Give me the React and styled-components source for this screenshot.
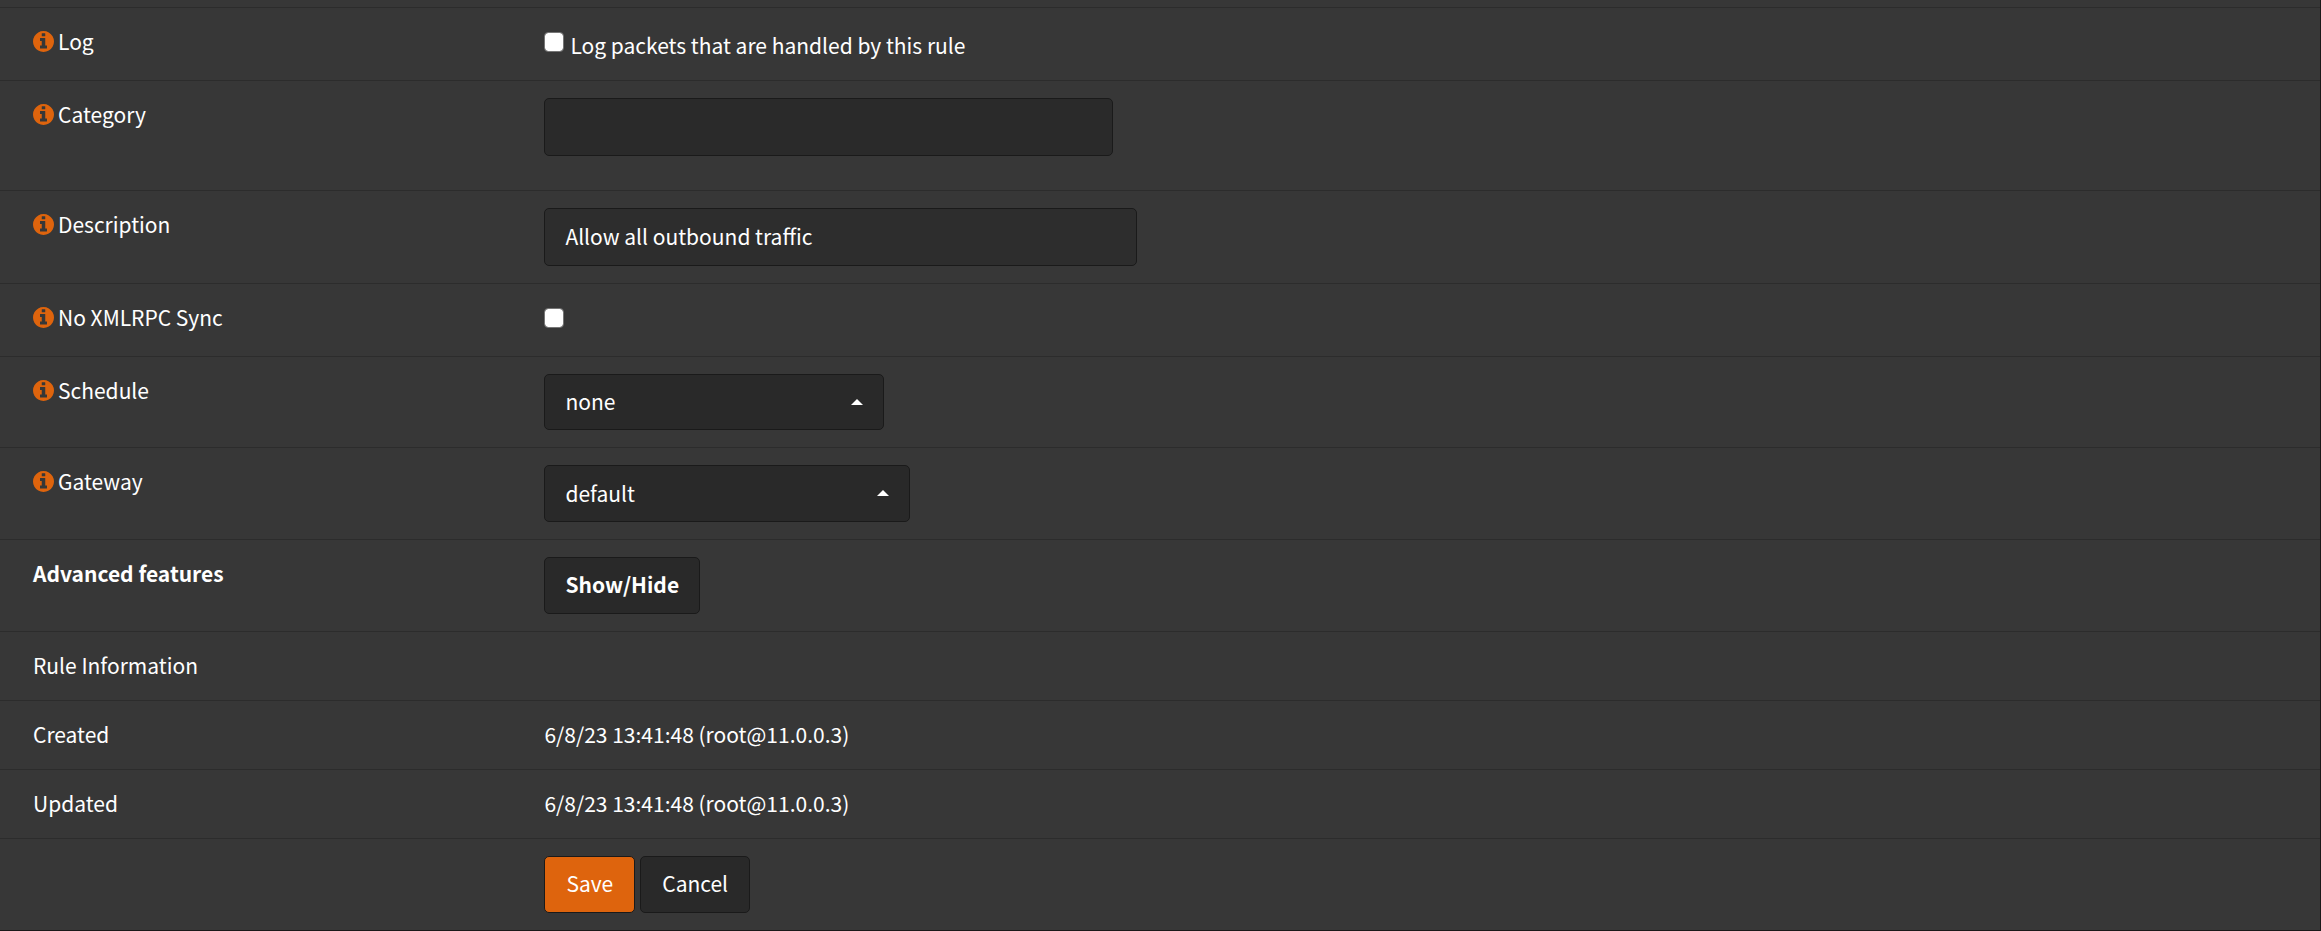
import React from "react";
import styled, { createGlobalStyle } from "styled-components";

const GlobalStyle = createGlobalStyle`
  * { box-sizing: border-box; }
  body {
    margin: 0;
    background: #373737;
    color: #fff;
    font-family: "Noto Sans CJK SC", "Noto Sans", sans-serif;
    font-size: 21px;
    line-height: 32px;
  }
  button, input, select { font: inherit; color: inherit; margin: 0; }
`;

const Panel = styled.form`
  padding-top: 7px;
  border-right: 1px solid #1a1a1a;
  border-bottom: 1px solid #1a1a1a;
`;

const Row = styled.div`
  display: grid;
  grid-template-columns: 22% 1fr;
  border-top: 1px solid #2c2c2c;
`;

const LabelCell = styled.div`
  display: flex;
  align-items: flex-start;
  gap: 4px;
  padding: 17px 0 19px 33px;
  font-weight: ${(p) => (p.$strong ? 700 : 400)};
`;

const ValueCell = styled.div`
  display: flex;
  align-items: flex-start;
  gap: 5px;
  padding: 17px 17px 17px 34px;
  padding-bottom: ${(p) => (p.$spacious ? 34 : 17)}px;
`;

const HelpButton = styled.button`
  display: block;
  margin-top: 6px;
  padding: 0;
  border: 0;
  background: none;
  color: #de640d;
  line-height: 0;
  cursor: pointer;
`;

const CheckLine = styled.label`
  display: flex;
  align-items: flex-start;
  gap: 6px;
  height: 38px;
`;

const CheckText = styled.span`
  padding-top: 4px;
`;

const Checkbox = styled.input.attrs({ type: "checkbox" })`
  appearance: none;
  width: 20px;
  height: 20px;
  margin-top: 7px;
  border: 1px solid #767676;
  border-radius: 4px;
  background: #fff;
  background-clip: padding-box;
  &:checked { background: #de640d; }
`;

const TextInput = styled.input.attrs({ type: "text" })`
  width: ${(p) => p.$width}px;
  max-width: 100%;
  height: 58px;
  padding: 0 20px 2px;
  border: 1px solid #1a1a1a;
  border-radius: 5px;
  background: ${(p) => p.$tone};
`;

const SelectBox = styled.div`
  position: relative;
  width: ${(p) => p.$width}px;
  max-width: 100%;
  height: ${(p) => p.$height}px;
`;

const Select = styled.select`
  appearance: none;
  width: 100%;
  height: 100%;
  padding: 0 48px 2px 20px;
  border: 1px solid #1a1a1a;
  border-radius: 5px;
  background: #292929;
`;

const Caret = styled.svg`
  position: absolute;
  right: 21px;
  top: 25px;
  pointer-events: none;
`;

const Button = styled.button`
  height: 57px;
  padding: 0 ${(p) => (p.$strong ? 20 : 21)}px 4px;
  border: 1px solid #1a1a1a;
  border-radius: 5px;
  background: ${(p) => (p.$primary ? "#de640d" : "#292929")};
  font-weight: ${(p) => (p.$strong ? 700 : 400)};
  cursor: pointer;
`;

const InfoIcon = () => (
  <svg width="21" height="21" viewBox="0 128 1536 1536" fill="currentColor" aria-hidden="true">
    <path d="M1024 1376v-160q0-14-9-23t-23-9h-96v-512q0-14-9-23t-23-9h-320q-14 0-23 9t-9 23v160q0 14 9 23t23 9h96v320h-96q-14 0-23 9t-9 23v160q0 14 9 23t23 9h448q14 0 23-9t9-23zm-128-896v-160q0-14-9-23t-23-9h-192q-14 0-23 9t-9 23v160q0 14 9 23t23 9h192q14 0 23-9t9-23zm640 416q0 209-103 385.500t-279.500 279.500-385.500 103-385.500-103-279.500-279.500-103-385.500 103-385.500 279.500-279.500 385.500-103 385.500 103 279.500 279.500 103 385.500z" />
  </svg>
);

function Field({ id, label, spacious, children }) {
  return (
    <Row>
      <LabelCell>
        <HelpButton type="button" aria-label={`Help: ${label}`}>
          <InfoIcon />
        </HelpButton>
        <label htmlFor={id}>{label}</label>
      </LabelCell>
      <ValueCell $spacious={spacious}>{children}</ValueCell>
    </Row>
  );
}

function Info({ label, children }) {
  return (
    <Row>
      <LabelCell>{label}</LabelCell>
      <ValueCell>{children}</ValueCell>
    </Row>
  );
}

function Dropdown({ id, width, height, value }) {
  return (
    <SelectBox $width={width} $height={height}>
      <Select id={id} defaultValue={value}>
        <option value={value}>{value}</option>
      </Select>
      <Caret width="12" height="6" viewBox="0 0 12 6" fill="#fff" aria-hidden="true">
        <path d="M0 6L6 0L12 6Z" />
      </Caret>
    </SelectBox>
  );
}

export default function App() {
  return (
    <>
      <GlobalStyle />
      <Panel onSubmit={(e) => e.preventDefault()}>
        <Field id="log" label="Log">
          <CheckLine>
            <Checkbox id="log" />
            <CheckText>Log packets that are handled by this rule</CheckText>
          </CheckLine>
        </Field>
        <Field id="category" label="Category" spacious>
          <TextInput id="category" $width={569} $tone="#2a2a2a" />
        </Field>
        <Field id="description" label="Description">
          <TextInput
            id="description"
            $width={593}
            $tone="#2d2d2d"
            defaultValue="Allow all outbound traffic"
          />
        </Field>
        <Field id="nosync" label="No XMLRPC Sync">
          <CheckLine>
            <Checkbox id="nosync" />
          </CheckLine>
        </Field>
        <Field id="schedule" label="Schedule">
          <Dropdown id="schedule" width={340} height={56} value="none" />
        </Field>
        <Field id="gateway" label="Gateway">
          <Dropdown id="gateway" width={366} height={57} value="default" />
        </Field>
        <Row>
          <LabelCell $strong>Advanced features</LabelCell>
          <ValueCell>
            <Button type="button" $strong>Show/Hide</Button>
          </ValueCell>
        </Row>
        <Info label="Rule Information" />
        <Info label="Created">6/8/23 13:41:48 (root@11.0.0.3)</Info>
        <Info label="Updated">6/8/23 13:41:48 (root@11.0.0.3)</Info>
        <Info>
          <Button type="submit" $primary>Save</Button>
          <Button type="button">Cancel</Button>
        </Info>
      </Panel>
    </>
  );
}
